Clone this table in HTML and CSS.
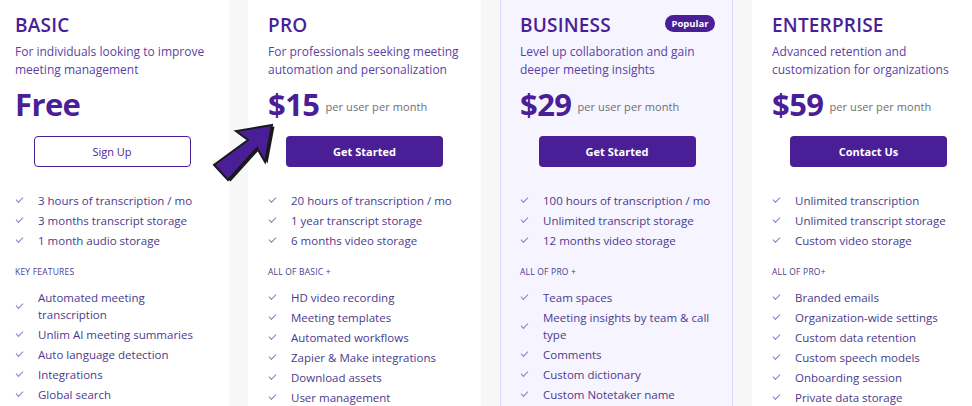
FILE: index.html
```html
<!DOCTYPE html>
<html>
<head>
<meta charset="utf-8">
<link rel="stylesheet" href="styles.css">
</head>
<body>
<div class="plans">
  <div class="card card-first">
    <h2 class="title">BASIC</h2>
    <p class="desc">For individuals looking to improve meeting management</p>
    <div class="price"><span class="amount">Free</span></div>
    <a class="btn btn-outline">Sign Up</a>
    <ul class="list first">
      <li>3 hours of transcription / mo</li>
      <li>3 months transcript storage</li>
      <li>1 month audio storage</li>
    </ul>
    <div class="label">KEY FEATURES</div>
    <ul class="list">
      <li>Automated meeting transcription</li>
      <li>Unlim AI meeting summaries</li>
      <li>Auto language detection</li>
      <li>Integrations</li>
      <li>Global search</li>
    </ul>
  </div>
  <div class="card">
    <h2 class="title">PRO</h2>
    <p class="desc">For professionals seeking meeting automation and personalization</p>
    <div class="price"><span class="amount">$15</span><span class="per">per user per month</span></div>
    <a class="btn btn-fill">Get Started</a>
    <ul class="list first">
      <li>20 hours of transcription / mo</li>
      <li>1 year transcript storage</li>
      <li>6 months video storage</li>
    </ul>
    <div class="label">ALL OF BASIC +</div>
    <ul class="list">
      <li>HD video recording</li>
      <li>Meeting templates</li>
      <li>Automated workflows</li>
      <li>Zapier &amp; Make integrations</li>
      <li>Download assets</li>
      <li>User management</li>
    </ul>
  </div>
  <div class="card card-popular">
    <span class="badge">Popular</span>
    <h2 class="title">BUSINESS</h2>
    <p class="desc">Level up collaboration and gain deeper meeting insights</p>
    <div class="price"><span class="amount">$29</span><span class="per">per user per month</span></div>
    <a class="btn btn-fill">Get Started</a>
    <ul class="list first">
      <li>100 hours of transcription / mo</li>
      <li>Unlimited transcript storage</li>
      <li>12 months video storage</li>
    </ul>
    <div class="label">ALL OF PRO +</div>
    <ul class="list">
      <li>Team spaces</li>
      <li>Meeting insights by team &amp; call type</li>
      <li>Comments</li>
      <li>Custom dictionary</li>
      <li>Custom Notetaker name</li>
    </ul>
  </div>
  <div class="card">
    <h2 class="title">ENTERPRISE</h2>
    <p class="desc">Advanced retention and customization for organizations</p>
    <div class="price"><span class="amount">$59</span><span class="per">per user per month</span></div>
    <a class="btn btn-fill">Contact Us</a>
    <ul class="list first">
      <li>Unlimited transcription</li>
      <li>Unlimited transcript storage</li>
      <li>Custom video storage</li>
    </ul>
    <div class="label">ALL OF PRO+</div>
    <ul class="list">
      <li>Branded emails</li>
      <li>Organization-wide settings</li>
      <li>Custom data retention</li>
      <li>Custom speech models</li>
      <li>Onboarding session</li>
      <li>Private data storage</li>
    </ul>
  </div>
</div>
<svg class="arrow" width="80" height="80" viewBox="205 110 80 80">
  <polygon points="273,125 266,162 257,149 229,180 215,166 249,140 236,131" fill="#1a1a1a" transform="translate(1.5,1.5)"/>
  <polygon points="272,125 265,162 257,148 228,180 214,165 248,140 236,131" fill="#4a1e96" stroke="#1a1a1a" stroke-width="2" stroke-linejoin="miter"/>
</svg>
</body>
</html>
```
FILE: styles.css
```css
* { box-sizing: border-box; }
html, body { margin: 0; padding: 0; }
body {
  background: #f7f7f7;
  font-family: "Open Sans", "Noto Sans", sans-serif;
  width: 972px;
  height: 406px;
  overflow: hidden;
  position: relative;
}
.plans {
  display: flex;
  gap: 19px;
  margin-left: -4px;
  height: 406px;
}
.card {
  flex: 0 0 233px;
  background: #ffffff;
  padding: 13px 20px 0 20px;
  position: relative;
}
.card-first { padding-left: 19px; }
.card-popular {
  background: #f6f4ff;
  border-left: 1px solid #ddd5fb;
  border-right: 1px solid #ddd5fb;
  padding-left: 19px;
  padding-right: 18px;
}
.badge {
  position: absolute;
  top: 15px;
  right: 17px;
  width: 50px;
  height: 17px;
  border-radius: 9px;
  background: #4a1e96;
  color: #fff;
  font-size: 9.5px;
  font-weight: 700;
  line-height: 17px;
  text-align: center;
}
.title {
  margin: 0;
  font-size: 19px;
  line-height: 24px;
  font-weight: 600;
  color: #4a1e96;
  letter-spacing: 0.2px;
}
.desc {
  margin: 6px 0 0 0;
  font-size: 12px;
  line-height: 18px;
  color: #5b3fa5;
}
.price {
  margin-top: 3px;
  height: 44px;
  display: flex;
  align-items: center;
  gap: 6px;
}
.amount {
  font-size: 31px;
  font-weight: 700;
  color: #4a1e96;
  line-height: 44px;
  letter-spacing: -0.6px;
}
.per {
  font-size: 11px;
  color: #6e6e6e;
  margin-top: 4px;
  letter-spacing: 0.1px;
}
.btn {
  display: flex;
  align-items: center;
  justify-content: center;
  margin: 10px auto 0 auto;
  width: 157px;
  height: 31px;
  border-radius: 4px;
  font-size: 11px;
  text-decoration: none;
}
.btn-outline {
  border: 1px solid #4a1e96;
  color: #4a1e96;
  background: #fff;
}
.btn-fill {
  background: #4a1e96;
  color: #fff;
  font-weight: 700;
}
.list {
  list-style: none;
  margin: 10.5px 0 0 0;
  padding: 0;
  display: flex;
  flex-direction: column;
  gap: 3px;
}
.list.first { margin-top: 24.5px; }
.list li {
  position: relative;
  padding-left: 23px;
  font-size: 11.5px;
  line-height: 17px;
  color: #4b3a8e;
}
.list li::before {
  content: "";
  position: absolute;
  left: 1px;
  top: 50%;
  width: 6px;
  height: 3px;
  margin-top: -3px;
  border-left: 1px solid #8c7cc8;
  border-bottom: 1px solid #8c7cc8;
  transform: rotate(-45deg);
}
.label {
  margin-top: 17.5px;
  font-size: 8.5px;
  line-height: 12px;
  color: #4b3a8e;
  letter-spacing: 0.2px;
}
.arrow {
  position: absolute;
  left: 205px;
  top: 110px;
}
```
